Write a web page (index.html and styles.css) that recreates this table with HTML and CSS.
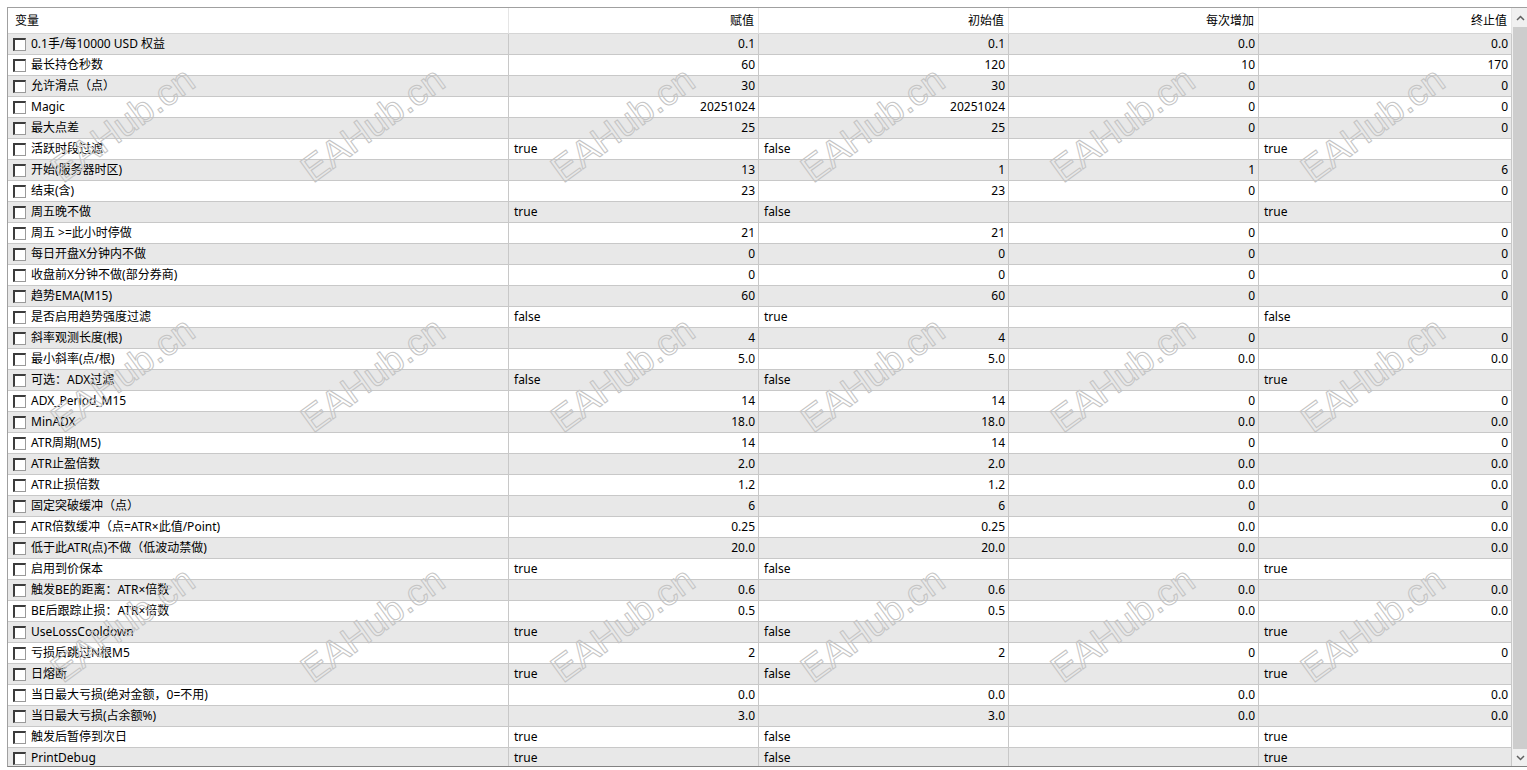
FILE: index.html
```html
<!DOCTYPE html>
<html lang="zh-CN">
<head>
<meta charset="utf-8">
<title>参数</title>
<link rel="stylesheet" href="styles.css">
</head>
<body>
<div class="frame">
  <div class="grid">
    <div class="row head">
      <div class="c">变量</div><div class="c r">赋值</div><div class="c r">初始值</div><div class="c r">每次增加</div><div class="c r">终止值</div>
    </div>
    <div class="row"><div class="c name"><span class="cb"></span>0.1手/每10000 USD 权益</div><div class="c r">0.1</div><div class="c r">0.1</div><div class="c r">0.0</div><div class="c r">0.0</div></div>
    <div class="row"><div class="c name"><span class="cb"></span>最长持仓秒数</div><div class="c r">60</div><div class="c r">120</div><div class="c r">10</div><div class="c r">170</div></div>
    <div class="row"><div class="c name"><span class="cb"></span>允许滑点（点）</div><div class="c r">30</div><div class="c r">30</div><div class="c r">0</div><div class="c r">0</div></div>
    <div class="row"><div class="c name"><span class="cb"></span>Magic</div><div class="c r">20251024</div><div class="c r">20251024</div><div class="c r">0</div><div class="c r">0</div></div>
    <div class="row"><div class="c name"><span class="cb"></span>最大点差</div><div class="c r">25</div><div class="c r">25</div><div class="c r">0</div><div class="c r">0</div></div>
    <div class="row"><div class="c name"><span class="cb"></span>活跃时段过滤</div><div class="c">true</div><div class="c">false</div><div class="c"></div><div class="c">true</div></div>
    <div class="row"><div class="c name"><span class="cb"></span>开始(服务器时区)</div><div class="c r">13</div><div class="c r">1</div><div class="c r">1</div><div class="c r">6</div></div>
    <div class="row"><div class="c name"><span class="cb"></span>结束(含)</div><div class="c r">23</div><div class="c r">23</div><div class="c r">0</div><div class="c r">0</div></div>
    <div class="row"><div class="c name"><span class="cb"></span>周五晚不做</div><div class="c">true</div><div class="c">false</div><div class="c"></div><div class="c">true</div></div>
    <div class="row"><div class="c name"><span class="cb"></span>周五 &gt;=此小时停做</div><div class="c r">21</div><div class="c r">21</div><div class="c r">0</div><div class="c r">0</div></div>
    <div class="row"><div class="c name"><span class="cb"></span>每日开盘X分钟内不做</div><div class="c r">0</div><div class="c r">0</div><div class="c r">0</div><div class="c r">0</div></div>
    <div class="row"><div class="c name"><span class="cb"></span>收盘前X分钟不做(部分券商)</div><div class="c r">0</div><div class="c r">0</div><div class="c r">0</div><div class="c r">0</div></div>
    <div class="row"><div class="c name"><span class="cb"></span>趋势EMA(M15)</div><div class="c r">60</div><div class="c r">60</div><div class="c r">0</div><div class="c r">0</div></div>
    <div class="row"><div class="c name"><span class="cb"></span>是否启用趋势强度过滤</div><div class="c">false</div><div class="c">true</div><div class="c"></div><div class="c">false</div></div>
    <div class="row"><div class="c name"><span class="cb"></span>斜率观测长度(根)</div><div class="c r">4</div><div class="c r">4</div><div class="c r">0</div><div class="c r">0</div></div>
    <div class="row"><div class="c name"><span class="cb"></span>最小斜率(点/根)</div><div class="c r">5.0</div><div class="c r">5.0</div><div class="c r">0.0</div><div class="c r">0.0</div></div>
    <div class="row"><div class="c name"><span class="cb"></span>可选：ADX过滤</div><div class="c">false</div><div class="c">false</div><div class="c"></div><div class="c">true</div></div>
    <div class="row"><div class="c name"><span class="cb"></span>ADX_Period_M15</div><div class="c r">14</div><div class="c r">14</div><div class="c r">0</div><div class="c r">0</div></div>
    <div class="row"><div class="c name"><span class="cb"></span>MinADX</div><div class="c r">18.0</div><div class="c r">18.0</div><div class="c r">0.0</div><div class="c r">0.0</div></div>
    <div class="row"><div class="c name"><span class="cb"></span>ATR周期(M5)</div><div class="c r">14</div><div class="c r">14</div><div class="c r">0</div><div class="c r">0</div></div>
    <div class="row"><div class="c name"><span class="cb"></span>ATR止盈倍数</div><div class="c r">2.0</div><div class="c r">2.0</div><div class="c r">0.0</div><div class="c r">0.0</div></div>
    <div class="row"><div class="c name"><span class="cb"></span>ATR止损倍数</div><div class="c r">1.2</div><div class="c r">1.2</div><div class="c r">0.0</div><div class="c r">0.0</div></div>
    <div class="row"><div class="c name"><span class="cb"></span>固定突破缓冲（点）</div><div class="c r">6</div><div class="c r">6</div><div class="c r">0</div><div class="c r">0</div></div>
    <div class="row"><div class="c name"><span class="cb"></span>ATR倍数缓冲（点=ATR×此值/Point)</div><div class="c r">0.25</div><div class="c r">0.25</div><div class="c r">0.0</div><div class="c r">0.0</div></div>
    <div class="row"><div class="c name"><span class="cb"></span>低于此ATR(点)不做（低波动禁做)</div><div class="c r">20.0</div><div class="c r">20.0</div><div class="c r">0.0</div><div class="c r">0.0</div></div>
    <div class="row"><div class="c name"><span class="cb"></span>启用到价保本</div><div class="c">true</div><div class="c">false</div><div class="c"></div><div class="c">true</div></div>
    <div class="row"><div class="c name"><span class="cb"></span>触发BE的距离：ATR×倍数</div><div class="c r">0.6</div><div class="c r">0.6</div><div class="c r">0.0</div><div class="c r">0.0</div></div>
    <div class="row"><div class="c name"><span class="cb"></span>BE后跟踪止损：ATR×倍数</div><div class="c r">0.5</div><div class="c r">0.5</div><div class="c r">0.0</div><div class="c r">0.0</div></div>
    <div class="row"><div class="c name"><span class="cb"></span>UseLossCooldown</div><div class="c">true</div><div class="c">false</div><div class="c"></div><div class="c">true</div></div>
    <div class="row"><div class="c name"><span class="cb"></span>亏损后跳过N根M5</div><div class="c r">2</div><div class="c r">2</div><div class="c r">0</div><div class="c r">0</div></div>
    <div class="row"><div class="c name"><span class="cb"></span>日熔断</div><div class="c">true</div><div class="c">false</div><div class="c"></div><div class="c">true</div></div>
    <div class="row"><div class="c name"><span class="cb"></span>当日最大亏损(绝对金额，0=不用)</div><div class="c r">0.0</div><div class="c r">0.0</div><div class="c r">0.0</div><div class="c r">0.0</div></div>
    <div class="row"><div class="c name"><span class="cb"></span>当日最大亏损(占余额%)</div><div class="c r">3.0</div><div class="c r">3.0</div><div class="c r">0.0</div><div class="c r">0.0</div></div>
    <div class="row"><div class="c name"><span class="cb"></span>触发后暂停到次日</div><div class="c">true</div><div class="c">false</div><div class="c"></div><div class="c">true</div></div>
    <div class="row"><div class="c name"><span class="cb"></span>PrintDebug</div><div class="c">true</div><div class="c">false</div><div class="c"></div><div class="c">true</div></div>
  </div>
  <div class="scrollbar">
    <div class="sb-btn"><svg width="9" height="6" viewBox="0 0 9 6"><polyline points="1,5 4.5,1.5 8,5" fill="none" stroke="#606060" stroke-width="1.5"/></svg></div>
    <div class="sb-thumb"></div>
    <div class="sb-btn down"><svg width="9" height="6" viewBox="0 0 9 6"><polyline points="1,1 4.5,4.5 8,1" fill="none" stroke="#606060" stroke-width="1.5"/></svg></div>
  </div>
</div>
<div class="watermarks">
  <span class="wm">EAHub.cn</span><span class="wm">EAHub.cn</span><span class="wm">EAHub.cn</span><span class="wm">EAHub.cn</span><span class="wm">EAHub.cn</span><span class="wm">EAHub.cn</span>
  <span class="wm">EAHub.cn</span><span class="wm">EAHub.cn</span><span class="wm">EAHub.cn</span><span class="wm">EAHub.cn</span><span class="wm">EAHub.cn</span><span class="wm">EAHub.cn</span>
  <span class="wm">EAHub.cn</span><span class="wm">EAHub.cn</span><span class="wm">EAHub.cn</span><span class="wm">EAHub.cn</span><span class="wm">EAHub.cn</span><span class="wm">EAHub.cn</span>
</div>
</body>
</html>
```
FILE: styles.css
```css
html, body {
  margin: 0;
  padding: 0;
  background: #ffffff;
  overflow: hidden;
  width: 1527px;
  height: 770px;
}
body {
  position: relative;
  font-family: "Noto Sans", "Noto Sans CJK SC", sans-serif;
  font-size: 12px;
  color: #000;
}
.frame {
  margin: 7px 0 0 7px;
  width: 1521px;
  height: 758px;
  border-top: 1px solid #a0a0a0;
  border-left: 1px solid #a0a0a0;
  border-bottom: 1px solid #828282;
  display: flex;
  overflow: hidden;
  background: #fff;
}
.grid {
  width: 1504px;
  flex: none;
  display: flex;
  flex-direction: column;
}
.row {
  display: grid;
  grid-template-columns: 501px 250px 250px 250px 253px;
  height: 21px;
  flex: none;
}
.row:nth-child(even) {
  background: #e8e8e8;
}
.c {
  box-sizing: border-box;
  border-right: 1px solid #c8c8c8;
  border-bottom: 1px solid #c8c8c8;
  padding: 0 3px 0 5px;
  line-height: 20px;
  white-space: nowrap;
  overflow: hidden;
}
.r {
  text-align: right;
}
.head {
  height: 26px;
  background: #fff;
}
.head .c {
  line-height: 25px;
  border-right-color: #e5e5e5;
  border-bottom-color: #d5d5d5;
  padding-left: 7px;
  padding-right: 4px;
}
.name {
  display: flex;
  align-items: center;
  gap: 5px;
}
.cb {
  flex: none;
  box-sizing: border-box;
  width: 13px;
  height: 13px;
  background: #fff;
  border-top: 2px solid #3c3c3c;
  border-left: 2px solid #3c3c3c;
  border-right: 1px solid #9a9a9a;
  border-bottom: 1px solid #9a9a9a;
}
.scrollbar {
  width: 17px;
  flex: none;
  background: #f0f0f0;
  display: flex;
  flex-direction: column;
}
.sb-btn {
  height: 19px;
  display: flex;
  align-items: center;
  justify-content: center;
  flex: none;
}
.sb-btn.down {
  height: 17px;
}
.sb-thumb {
  flex: 1;
  background: #cdcdcd;
  margin: 0 2px 0 1px;
}
.watermarks {
  position: absolute;
  top: 0;
  left: -2px;
  display: grid;
  grid-template-columns: repeat(6, 250px);
  grid-auto-rows: 250px;
  pointer-events: none;
}
.wm {
  display: flex;
  align-items: center;
  justify-content: center;
  font-family: "Liberation Sans", sans-serif;
  font-size: 37px;
  color: transparent;
  -webkit-text-stroke: 1px #c4c4c4;
  transform: rotate(-36deg);
  white-space: nowrap;
}
```
